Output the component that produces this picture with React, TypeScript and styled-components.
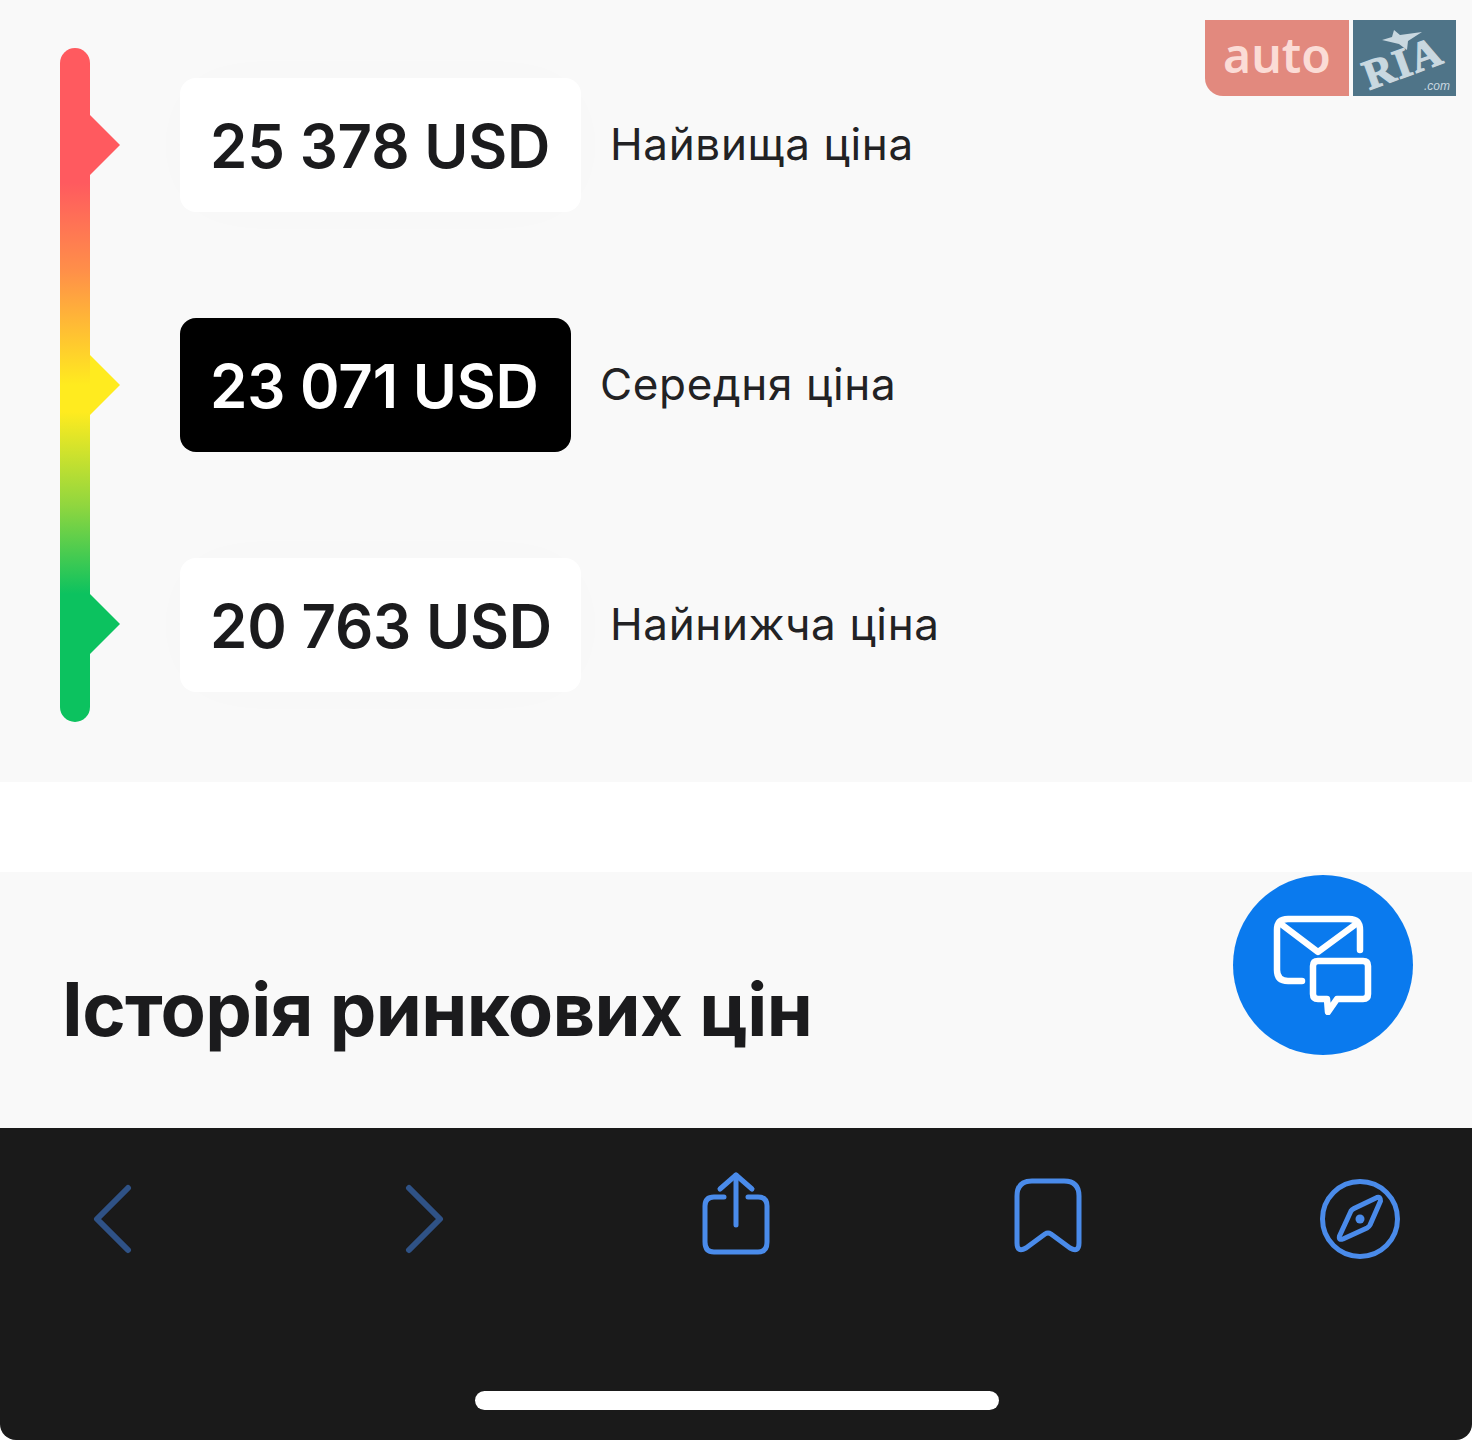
import React from 'react';
import styled, { createGlobalStyle } from 'styled-components';

const GlobalStyle = createGlobalStyle`
  html, body {
    margin: 0;
    padding: 0;
    background: #ffffff;
  }
  * {
    box-sizing: border-box;
  }
`;

const Page = styled.div`
  position: relative;
  width: 1472px;
  height: 1440px;
  overflow: hidden;
  display: flex;
  flex-direction: column;
  font-family: Inter, "Liberation Sans", sans-serif;
  color: #1b1b1d;
  background: #ffffff;
`;

const PriceSection = styled.section`
  height: 782px;
  background: #f9f9f9;
  display: flex;
  align-items: flex-start;
  padding: 48px 0 0 60px;
  gap: 90px;
`;

const Scale = styled.div`
  position: relative;
  flex: none;
  width: 30px;
  height: 674px;
  border-radius: 15px;
  background: linear-gradient(
    180deg,
    #ff5a5f 0%,
    #ff5a5f 20%,
    #ff8f49 33%,
    #ffeb1f 50%,
    #ffeb1f 54%,
    #8fd63f 68%,
    #0cc25f 81%,
    #0cc25f 100%
  );
`;

const Marker = styled.span<{ $top: number; $color: string }>`
  position: absolute;
  left: 30px;
  top: ${(p) => p.$top}px;
  width: 30px;
  height: 60px;
  background: ${(p) => p.$color};
  clip-path: polygon(0 0, 100% 50%, 0 100%);
`;

const PriceList = styled.div`
  display: flex;
  flex-direction: column;
  gap: 106px;
  padding-top: 30px;
`;

const PriceRow = styled.div`
  display: flex;
  align-items: center;
  gap: 29px;
`;

const PriceBox = styled.div<{ $dark?: boolean; $width: number }>`
  width: ${(p) => p.$width}px;
  height: 134px;
  padding: 1px 0 0 30px;
  display: flex;
  align-items: center;
  border-radius: 16px;
  font-size: 60px;
  font-weight: 600;
  letter-spacing: -0.2px;
  white-space: nowrap;
  background: ${(p) => (p.$dark ? '#000000' : '#ffffff')};
  color: ${(p) => (p.$dark ? '#ffffff' : '#1b1b1d')};
  box-shadow: ${(p) => (p.$dark ? 'none' : '0 0 80px rgba(0, 0, 0, 0.01)')};
`;

const PriceLabel = styled.span`
  margin-top: -2px;
  font-size: 44px;
  font-weight: 400;
  letter-spacing: 0.65px;
  color: #222224;
  white-space: nowrap;
`;

const Gap = styled.div`
  height: 90px;
  background: #ffffff;
`;

const HistorySection = styled.section`
  height: 256px;
  background: #f9f9f9;
  display: flex;
  align-items: flex-start;
  justify-content: space-between;
  padding: 3px 59px 0 62px;
`;

const Heading = styled.h2`
  margin: 91px 0 0;
  font-size: 74px;
  line-height: 86px;
  font-weight: 700;
  letter-spacing: -0.6px;
  color: #1b1b1d;
`;

const ChatButton = styled.button`
  width: 180px;
  height: 180px;
  padding: 0;
  border: none;
  border-radius: 50%;
  background: #0a7aee;
  display: flex;
  align-items: center;
  justify-content: center;
`;

const Toolbar = styled.nav`
  position: relative;
  flex: 1;
  background: #1a1a1a;
  border-radius: 0 0 16px 16px;
  display: flex;
  justify-content: space-between;
  align-items: flex-start;
  padding: 41px 72px 0 72px;
`;

const ToolSlot = styled.div`
  width: 80px;
  height: 100px;
  display: flex;
  align-items: center;
  justify-content: center;
`;

const HomeBar = styled.div`
  position: absolute;
  left: 475px;
  bottom: 30px;
  width: 524px;
  height: 19px;
  border-radius: 10px;
  background: #ffffff;
`;

const Logo = styled.div`
  position: absolute;
  top: 20px;
  left: 1205px;
  display: flex;
  gap: 4px;
  height: 76px;
`;

const LogoAuto = styled.div`
  width: 144px;
  border-radius: 0 0 0 18px;
  background: #e2897e;
  color: #fbdcd6;
  font-family: "Noto Sans", sans-serif;
  font-size: 48px;
  font-weight: 600;
  line-height: 70px;
  text-align: center;
`;

const LogoRia = styled.div`
  position: relative;
  width: 103px;
  background: #4f7488;
  color: #c9d8e0;
`;

const RiaText = styled.span`
  position: absolute;
  left: 9px;
  top: 22px;
  font-family: "Liberation Serif", serif;
  font-size: 42px;
  line-height: 42px;
  font-weight: 700;
  letter-spacing: 1.5px;
  -webkit-text-stroke: 1.2px #c9d8e0;
  transform: rotate(-20deg);
`;

const RiaStar = styled.svg`
  position: absolute;
  left: 28px;
  top: 9px;
`;

const RiaCom = styled.span`
  position: absolute;
  right: 6px;
  bottom: 3px;
  font-family: "Liberation Sans", sans-serif;
  font-size: 12px;
  font-style: italic;
  line-height: 14px;
`;

const activeBlue = '#4a8bea';
const dimBlue = '#2f5286';

function Chevron({ flip }: { flip?: boolean }) {
  return (
    <svg width="40" height="70" viewBox="0 0 40 70" fill="none">
      <path
        d={flip ? 'M5 4 L36 35 L5 66' : 'M36 4 L5 35 L36 66'}
        stroke={dimBlue}
        strokeWidth="6"
        strokeLinecap="round"
        strokeLinejoin="round"
      />
    </svg>
  );
}

function ShareIcon() {
  return (
    <svg width="68" height="100" viewBox="0 -3 68 100" fill="none" stroke={activeBlue} strokeWidth="5" strokeLinecap="round" strokeLinejoin="round">
      <path d="M22 25 H12 Q3 25 3 34 V70 Q3 80 12 80 H56 Q65 80 65 70 V34 Q65 25 56 25 H46" />
      <path d="M34 53 V3" />
      <path d="M18 17 L34 3 L50 17" />
    </svg>
  );
}

function BookmarkIcon() {
  return (
    <svg width="68" height="100" viewBox="0 -9 68 100" fill="none" stroke={activeBlue} strokeWidth="5" strokeLinecap="round" strokeLinejoin="round">
      <path d="M18 3 H50 Q65 3 65 18 V65 Q65 75 56 70 L37 56 Q34 54 31 56 L12 70 Q3 75 3 65 V18 Q3 3 18 3 Z" />
    </svg>
  );
}

function CompassIcon() {
  return (
    <svg width="80" height="80" viewBox="0 0 80 80" fill="none" stroke={activeBlue} strokeWidth="5" strokeLinejoin="round">
      <circle cx="40" cy="40" r="37.5" />
      <path d="M57 18.5 Q60.5 17.5 60.5 22 L50 46 Q49 48 47 49 L23 60 Q18.5 61.5 19.5 57 L31 32 Q32 30.5 34 29.5 Z" />
      <circle cx="40" cy="40" r="4.5" fill={activeBlue} stroke="none" />
    </svg>
  );
}

function ChatIcon() {
  return (
    <svg width="100" height="100" viewBox="0 0 100 100" fill="none" stroke="#ffffff" strokeWidth="6.5" strokeLinecap="round" strokeLinejoin="round">
      <path d="M29 66 H15 Q4 66 4 55 V15 Q4 4 15 4 H76 Q87 4 87 15 V35" />
      <path d="M8 9 L45 37 L83 9" />
      <path d="M45 46 H90 Q95 46 95 51 V79 Q95 84 90 84 H64 L55 97 L54 84 H45 Q40 84 40 79 V51 Q40 46 45 46 Z" />
    </svg>
  );
}

const prices = [
  { value: '25 378 USD', label: 'Найвища ціна', width: 401 },
  { value: '23 071 USD', label: 'Середня ціна', width: 391, dark: true },
  { value: '20 763 USD', label: 'Найнижча ціна', width: 401 },
];

export default function App() {
  return (
    <Page>
      <GlobalStyle />
      <PriceSection>
        <Scale>
          <Marker $top={67} $color="#ff5a5f" />
          <Marker $top={307} $color="#ffeb1f" />
          <Marker $top={546} $color="#0cc25f" />
        </Scale>
        <PriceList>
          {prices.map((item) => (
            <PriceRow key={item.value}>
              <PriceBox $dark={item.dark} $width={item.width}>{item.value}</PriceBox>
              <PriceLabel>{item.label}</PriceLabel>
            </PriceRow>
          ))}
        </PriceList>
      </PriceSection>
      <Gap />
      <HistorySection>
        <Heading>Історія ринкових цін</Heading>
        <ChatButton aria-label="chat">
          <ChatIcon />
        </ChatButton>
      </HistorySection>
      <Toolbar>
        <ToolSlot><Chevron /></ToolSlot>
        <ToolSlot><Chevron flip /></ToolSlot>
        <ToolSlot><ShareIcon /></ToolSlot>
        <ToolSlot><BookmarkIcon /></ToolSlot>
        <ToolSlot><CompassIcon /></ToolSlot>
        <HomeBar />
      </Toolbar>
      <Logo>
        <LogoAuto>auto</LogoAuto>
        <LogoRia>
          <RiaStar width="44" height="26" viewBox="0 0 44 26">
            <path d="M13 1 L19 6 L41 3 L27 12 L26 21 L18 15 L1 11 L11 8 Z" fill="#c9d8e0" />
          </RiaStar>
          <RiaText>RIA</RiaText>
          <RiaCom>.com</RiaCom>
        </LogoRia>
      </Logo>
    </Page>
  );
}
